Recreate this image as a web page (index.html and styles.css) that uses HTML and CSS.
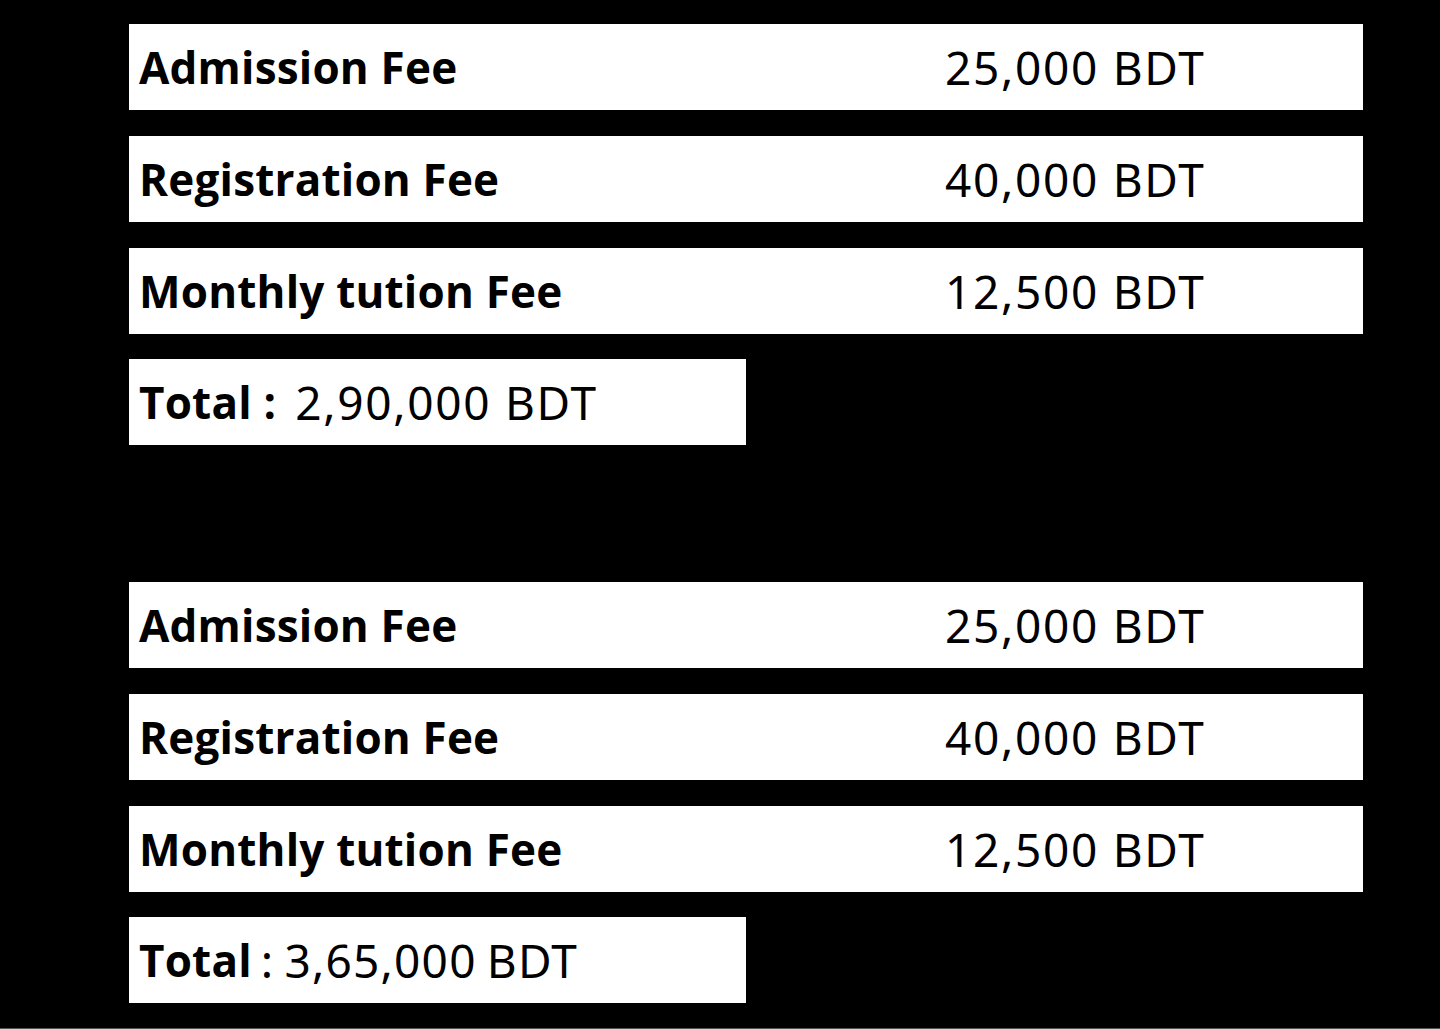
FILE: index.html
```html
<!DOCTYPE html>
<html lang="en">
<head>
<meta charset="utf-8">
<title>Fees</title>
<link rel="stylesheet" href="styles.css">
</head>
<body>
<main class="page">
  <section class="group">
    <div class="row"><span class="label">Admission Fee</span><span class="value">25,000 BDT</span></div>
    <div class="row"><span class="label">Registration Fee</span><span class="value">40,000 BDT</span></div>
    <div class="row"><span class="label">Monthly tution Fee</span><span class="value">12,500 BDT</span></div>
    <div class="total"><span class="label">Total :</span><span class="amount amount-wide">2,90,000 BDT</span></div>
  </section>
  <section class="group group-second">
    <div class="row"><span class="label">Admission Fee</span><span class="value">25,000 BDT</span></div>
    <div class="row"><span class="label">Registration Fee</span><span class="value">40,000 BDT</span></div>
    <div class="row"><span class="label">Monthly tution Fee</span><span class="value">12,500 BDT</span></div>
    <div class="total"><span class="label">Total</span><span class="amount amount-tight">: 3,65,000 BDT</span></div>
  </section>
</main>
</body>
</html>
```
FILE: styles.css
```css
html, body {
  margin: 0;
  padding: 0;
  background: #000;
}
body {
  height: 1029px;
  overflow: hidden;
  border-bottom: 1px solid #555;
  box-sizing: border-box;
}
.page {
  padding: 24px 0 0 129px;
  width: 1234px;
  font-family: "Open Sans", "Noto Sans", sans-serif;
  color: #000;
}
.group {
  display: flex;
  flex-direction: column;
  gap: 26px;
}
.group-second {
  margin-top: 137px;
}
.row {
  height: 86px;
  background: #fff;
  display: grid;
  grid-template-columns: 806px 1fr;
  align-items: center;
  padding-left: 10px;
}
.label {
  font-weight: 700;
  font-size: 44px;
  letter-spacing: 0.2px;
}
.value, .amount {
  font-family: "Noto Sans", "Open Sans", sans-serif;
  font-weight: 400;
  font-size: 46px;
  letter-spacing: 1.7px;
}
.total {
  width: 607px;
  height: 86px;
  margin-top: -1px;
  background: #fff;
  display: flex;
  align-items: center;
  padding-left: 10px;
}
.amount-wide {
  margin-left: 19px;
}
.amount-tight {
  margin-left: 9px;
  letter-spacing: 1.2px;
  word-spacing: -3px;
}
```
